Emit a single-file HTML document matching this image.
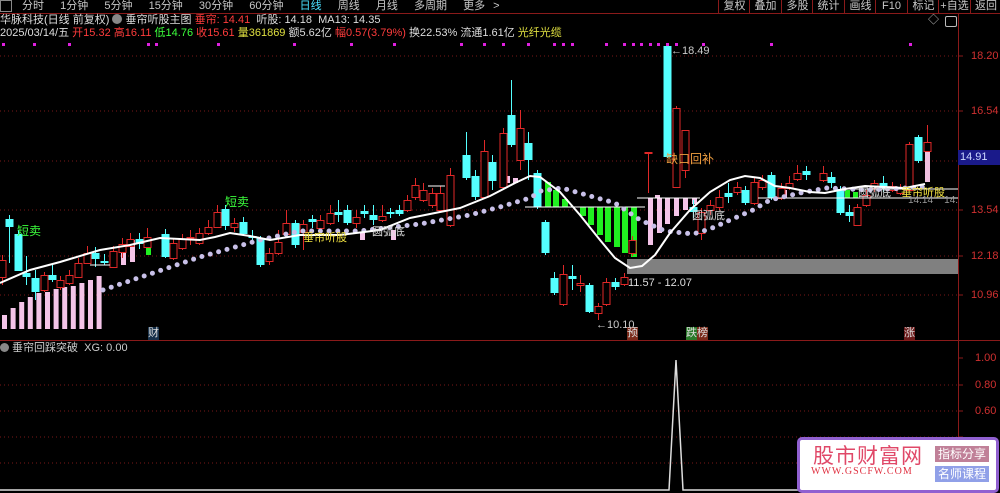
<!DOCTYPE html>
<html><head><meta charset="utf-8"><style>
html,body{margin:0;padding:0;background:#000;width:1000px;height:493px;overflow:hidden}
body{font-family:"Liberation Sans","Noto Sans CJK SC",sans-serif;position:relative}
.t{position:absolute;white-space:nowrap;font-size:11px;line-height:13px}
.mb{position:absolute;top:0;height:13px;border-left:1px solid #8a1a1a;color:#c8c8c8;font-size:11px;line-height:13px;text-align:center}
</style></head><body>
<svg width="1000" height="493" style="position:absolute;left:0;top:0" id="s">
<g stroke="#7a1818" stroke-dasharray="1 3" stroke-width="1">
<line x1="0" y1="56" x2="958" y2="56"/><line x1="0" y1="111" x2="958" y2="111"/><line x1="0" y1="161" x2="958" y2="161"/><line x1="0" y1="210" x2="958" y2="210"/><line x1="0" y1="256" x2="958" y2="256"/><line x1="0" y1="295" x2="958" y2="295"/>
<line x1="0" y1="385" x2="958" y2="385"/><line x1="0" y1="411" x2="958" y2="411"/><line x1="0" y1="437" x2="958" y2="437"/><line x1="0" y1="463" x2="958" y2="463"/>
</g>
<line x1="0" y1="13.5" x2="1000" y2="13.5" stroke="#8a1a1a"/>
<line x1="0" y1="340.5" x2="1000" y2="340.5" stroke="#8a1a1a"/>
<line x1="958.5" y1="14" x2="958.5" y2="493" stroke="#8a1a1a"/>
<g stroke="#8a1a1a"><line x1="958" y1="56" x2="963" y2="56"/><line x1="958" y1="111" x2="963" y2="111"/><line x1="958" y1="210" x2="963" y2="210"/><line x1="958" y1="256" x2="963" y2="256"/><line x1="958" y1="295" x2="963" y2="295"/><line x1="958" y1="358" x2="963" y2="358"/><line x1="958" y1="385" x2="963" y2="385"/><line x1="958" y1="411" x2="963" y2="411"/><line x1="958" y1="437" x2="963" y2="437"/><line x1="958" y1="463" x2="963" y2="463"/></g>
<rect x="627" y="259" width="331" height="15" fill="#808080"/>
<g id="hist"></g>
<g id="cand"></g>
<g stroke="#fff" stroke-width="1"><line x1="525" y1="207" x2="645" y2="207"/><line x1="637" y1="198" x2="700" y2="198"/><line x1="758" y1="198" x2="958" y2="198"/><line x1="840" y1="189" x2="958" y2="189"/><line x1="90" y1="265" x2="110" y2="265"/><line x1="428" y1="186" x2="445" y2="186"/></g>
<polyline fill="none" stroke="#c8c0e8" stroke-width="5" stroke-linecap="round" stroke-dasharray="0 8.7" points="103,290 200,257 260,240 300,231 360,231 420,224 470,215 500,207 530,198 541,191 562,188 590,196 615,203 640,220 665,231 693,234 710,229 753,210 770,200 800,193 827,188 870,190 925,187"/>
<polyline fill="none" stroke="#fff" stroke-width="2" points="0,283 30,270 60,262 100,250 130,245 160,238 200,240 215,237 230,233 250,236 270,240 300,235 340,235 380,230 410,218 440,212 460,208 490,196 515,183 530,176 540,177 560,192 580,215 600,240 615,258 630,268 642,266 655,255 670,233 690,210 710,192 730,180 745,176 760,178 775,186 790,188 810,192 825,193 845,189 865,186 885,187 905,188 925,184"/>
<g id="dots" fill="#e020e0"></g>
<polyline fill="none" stroke="#ddd" stroke-width="1.5" points="0,490 669,490 676,360 683,490 800,490"/>
</svg>
<div style="position:absolute;left:0;top:0;width:12px;height:12px;border:1px solid #888;box-sizing:border-box"></div>
<div class="t" style="left:22px;top:0;color:#c8c8c8;word-spacing:5px">分时 &nbsp;1分钟 &nbsp;5分钟 &nbsp;15分钟 &nbsp;30分钟 &nbsp;60分钟 &nbsp;<span style="color:#4ae0ff">日线</span> &nbsp;周线 &nbsp;月线 &nbsp;多周期 &nbsp;更多 &gt;</div>
<div class="mb" style="left:718px;width:31px">复权</div><div class="mb" style="left:749px;width:31px">叠加</div><div class="mb" style="left:781px;width:31px">多股</div><div class="mb" style="left:812px;width:31px">统计</div><div class="mb" style="left:844px;width:31px">画线</div><div class="mb" style="left:875px;width:31px">F10</div><div class="mb" style="left:907px;width:31px">标记</div><div class="mb" style="left:938px;width:31px">+自选</div><div class="mb" style="left:970px;width:30px">返回</div>
<div class="t" style="left:0;top:14px;color:#ddd">华脉科技(日线 前复权) <span style="display:inline-block;width:10px;height:10px;border-radius:5px;background:#888;vertical-align:-1px"></span> 垂帘听股主图 <span style="color:#ff3c3c">垂帘: 14.41</span> &nbsp;听股: 14.18 &nbsp;MA13: 14.35</div>
<div class="t" style="left:0;top:27px;color:#ddd">2025/03/14/五 <span style="color:#ff3c3c">开15.32 高16.11</span> <span style="color:#3cff3c">低14.76</span> <span style="color:#ff3c3c">收15.61</span> <span style="color:#e0e040">量361869</span> 额5.62亿 <span style="color:#ff3c3c">幅0.57(3.79%)</span> 换22.53% 流通1.61亿 <span style="color:#e0e040">光纤光缆</span></div>
<div class="t" style="left:928px;top:14px;color:#bbb">◇</div><div style="position:absolute;left:945px;top:16px;width:10px;height:9px;border:1px solid #bbb;border-radius:2px"></div>
<div class="t" style="left:17px;top:225px;color:#3cff3c;font-size:12px">短卖</div>
<div class="t" style="left:225px;top:196px;color:#3cff3c;font-size:12px">短卖</div>
<div class="t" style="left:303px;top:232px;color:#f0e040">垂帘听股</div>
<div class="t" style="left:372px;top:226px;color:#ddd">圆弧底</div>
<div class="t" style="left:666px;top:153px;color:#f0a040;font-size:12px">缺口回补</div>
<div class="t" style="left:692px;top:210px;color:#ddd">圆弧底</div>
<div class="t" style="left:858px;top:187px;color:#ddd">圆弧底</div>
<div class="t" style="left:901px;top:187px;color:#f0e040">垂帘听股</div>
<div class="t" style="left:908px;top:194px;color:#999;font-size:10px">14.14 &nbsp;&nbsp;&nbsp;14.</div>
<div class="t" style="left:671px;top:45px;color:#ccc">←18.49</div>
<div class="t" style="left:628px;top:277px;color:#ddd">11.57 - 12.07</div>
<div class="t" style="left:596px;top:319px;color:#ccc">←10.10</div>
<div class="t" style="left:148px;top:327px;color:#ddd;background:#16304a">财</div>
<div class="t" style="left:627px;top:327px;color:#ddd;background:#7a2a1a">预</div>
<div class="t" style="left:686px;top:327px;color:#ddd;background:linear-gradient(90deg,#2a7a2a 50%,#7a2a1a 50%)">跌榜</div>
<div class="t" style="left:904px;top:327px;color:#ddd;background:#6a1a1a">涨</div>
<div class="t" style="left:0;top:342px;color:#ccc"><span style="display:inline-block;width:9px;height:9px;border-radius:5px;background:#888;vertical-align:-1px"></span> 垂帘回踩突破 &nbsp;XG: 0.00</div>
<div class="t" style="left:971px;top:50px;color:#d03030">18.20</div>
<div class="t" style="left:971px;top:105px;color:#d03030">16.54</div>
<div style="position:absolute;left:958px;top:150px;width:42px;height:15px;background:#1a1a8a"></div>
<div class="t" style="left:960px;top:151px;color:#ccd8ff">14.91</div>
<div class="t" style="left:971px;top:204px;color:#d03030">13.54</div>
<div class="t" style="left:971px;top:250px;color:#d03030">12.18</div>
<div class="t" style="left:971px;top:289px;color:#d03030">10.96</div>
<div class="t" style="left:975px;top:352px;color:#d03030">1.00</div>
<div class="t" style="left:975px;top:379px;color:#d03030">0.80</div>
<div class="t" style="left:975px;top:405px;color:#d03030">0.60</div>
<div style="position:absolute;left:797px;top:437px;width:196px;height:50px;background:#fff;border:3px solid #9060d0;border-radius:5px"></div>
<div class="t" style="left:813px;top:446px;color:#e04868;font-size:21px;line-height:22px;letter-spacing:1px">股市财富网</div>
<div class="t" style="left:811px;top:466px;color:#e03040;font-family:'Liberation Serif',serif;font-size:10px;line-height:12px;letter-spacing:1px">WWW.GSCFW.COM</div>
<div class="t" style="left:935px;top:446px;width:54px;height:16px;line-height:16px;background:#c08098;color:#fff;font-size:12px;text-align:center">指标分享</div>
<div class="t" style="left:935px;top:466px;width:54px;height:16px;line-height:16px;background:#90a0e8;color:#fff;font-size:12px;text-align:center">名师课程</div>
<script>
var NS="http://www.w3.org/2000/svg";
function el(p,n,a){var e=document.createElementNS(NS,n);for(var k in a)e.setAttribute(k,a[k]);p.appendChild(e);}
var C=document.getElementById('cand'),H=document.getElementById('hist'),D=document.getElementById('dots');
var c=[[2,260,277,255,285,'r'],[9,219,227,215,263,'c'],[18,234,271,230,271,'c'],[26,273,277,256,285,'c'],[35,278,292,270,300,'c'],[44,275,290,272,292,'r'],[52,275,280,264,282,'c'],[60,280,287,276,290,'r'],[69,275,283,270,285,'r'],[78,263,277,258,278,'r'],[87,253,263,246,264,'r'],[95,253,259,247,267,'c'],[104,261,263,254,265,'c'],[113,251,267,246,268,'r'],[122,244,252,238,258,'r'],[130,239,246,233,247,'r'],[139,239,244,233,249,'c'],[147,237,247,228,248,'r'],[165,234,257,229,258,'c'],[173,243,258,238,260,'r'],[182,239,248,234,250,'r'],[190,237,238,230,245,'r'],[199,233,243,228,245,'r'],[208,227,233,220,235,'r'],[217,212,227,205,228,'r'],[225,209,226,205,230,'c'],[234,223,227,218,232,'r'],[243,222,234,217,236,'c'],[252,236,238,230,240,'c'],[260,238,265,236,267,'c'],[269,253,261,248,265,'r'],[278,242,253,230,255,'r'],[286,223,234,210,236,'r'],[295,223,245,220,248,'c'],[303,224,232,220,250,'r'],[312,219,222,215,228,'c'],[320,220,228,215,230,'r'],[330,213,223,205,225,'r'],[338,212,215,200,222,'c'],[347,210,223,205,225,'c'],[356,217,223,210,228,'r'],[364,211,214,205,218,'c'],[373,215,220,205,225,'c'],[382,216,220,205,222,'r'],[390,212,214,208,218,'c'],[399,210,214,205,216,'c'],[407,200,210,195,212,'r'],[415,185,197,178,200,'r'],[423,190,200,183,202,'r'],[432,193,205,188,208,'r'],[440,193,210,186,212,'r'],[450,175,225,168,227,'r'],[466,155,178,132,180,'c'],[475,176,197,170,200,'c'],[484,151,197,140,199,'r'],[492,162,181,155,190,'c'],[503,133,187,128,189,'r'],[511,115,145,80,147,'c'],[520,128,160,110,170,'r'],[528,143,160,132,180,'c'],[537,173,207,170,209,'c'],[545,222,253,220,255,'c'],[554,278,293,272,295,'c'],[563,274,304,265,306,'r'],[572,276,279,265,290,'c'],[580,283,285,275,292,'r'],[589,285,312,283,313,'c'],[598,306,313,303,320,'r'],[606,282,304,278,306,'r'],[615,282,287,278,290,'c'],[624,277,284,273,286,'r'],[632,240,253,236,256,'r'],[648,152,153,152,193,'r'],[667,46,157,44,158,'c'],[676,108,187,106,188,'r'],[685,130,170,130,178,'r'],[693,207,212,200,218,'c'],[701,212,233,208,240,'r'],[710,205,210,200,215,'r'],[719,197,207,190,210,'r'],[728,193,197,183,203,'c'],[737,187,192,182,195,'r'],[745,190,203,186,205,'c'],[754,182,203,178,205,'r'],[762,180,187,175,190,'r'],[771,175,198,172,200,'c'],[781,188,198,183,200,'r'],[789,183,188,176,190,'r'],[797,173,179,165,181,'r'],[806,171,175,166,180,'c'],[823,173,180,166,182,'r'],[831,177,183,172,188,'c'],[840,189,213,186,215,'c'],[849,212,216,205,222,'c'],[857,207,225,204,226,'r'],[866,195,205,190,207,'r'],[874,183,188,180,192,'r'],[883,183,188,176,192,'c'],[892,186,190,182,192,'r'],[900,188,193,184,195,'r'],[909,144,190,142,191,'r'],[918,137,161,135,163,'c'],[927,142,151,125,152,'r']];
c.forEach(function(d){var col=d[5]=='c'?'#54ffff':'#e02828';
el(C,'line',{x1:d[0]+.5,y1:d[3],x2:d[0]+.5,y2:d[4],stroke:col});
if(d[5]=='c')el(C,'rect',{x:d[0]-3.5,y:d[1],width:8,height:Math.max(1,d[2]-d[1]),fill:col});
else el(C,'rect',{x:d[0]-3,y:d[1]+.5,width:7,height:Math.max(1,d[2]-d[1]),fill:'#000',stroke:col});});
el(C,'rect',{x:925,y:152,width:5,height:30,fill:'#f0c0e0'});
var ph=[315,308,302,297,293,292,289,287,286,283,280,276];
ph.forEach(function(t,i){el(H,'rect',{x:2+i*8.6,y:t,width:5,height:329-t,fill:'#f4c4e8'});});
[[545,182,207],[553,190,207],[562,199,207]].forEach(function(b){el(H,'rect',{x:b[0],y:b[1],width:6,height:b[2]-b[1],fill:'#20f020'});});
[[580,216],[588,225],[597,235],[605,242],[614,247],[622,253],[631,257]].forEach(function(b){el(H,'rect',{x:b[0],y:207,width:6,height:b[1]-207,fill:'#20f020'});});
[[648,245],[657,233],[665,224],[674,216],[683,210],[692,204]].forEach(function(b){el(H,'rect',{x:b[0],y:198,width:5,height:b[1]-198,fill:'#f4c4e8'});});
[[505,176,183],[513,178,183],[121,245,265],[130,240,262],[360,232,240],[391,230,240],[655,195,198],[782,190,198],[845,190,198],[853,192,198]].forEach(function(b){el(H,'rect',{x:b[0],y:b[1],width:5,height:b[2]-b[1],fill:b[0]>840?'#20f020':'#f4c4e8'});});
el(H,'rect',{x:146,y:247,width:5,height:8,fill:'#20f020'});
[2,33,68,147,155,217,293,350,393,460,483,502,527,553,562,571,605,623,632,640,649,657,666,675,702,770,909].forEach(function(x){el(D,'rect',{x:x,y:43,width:3,height:3});});
</script>
</body></html>
